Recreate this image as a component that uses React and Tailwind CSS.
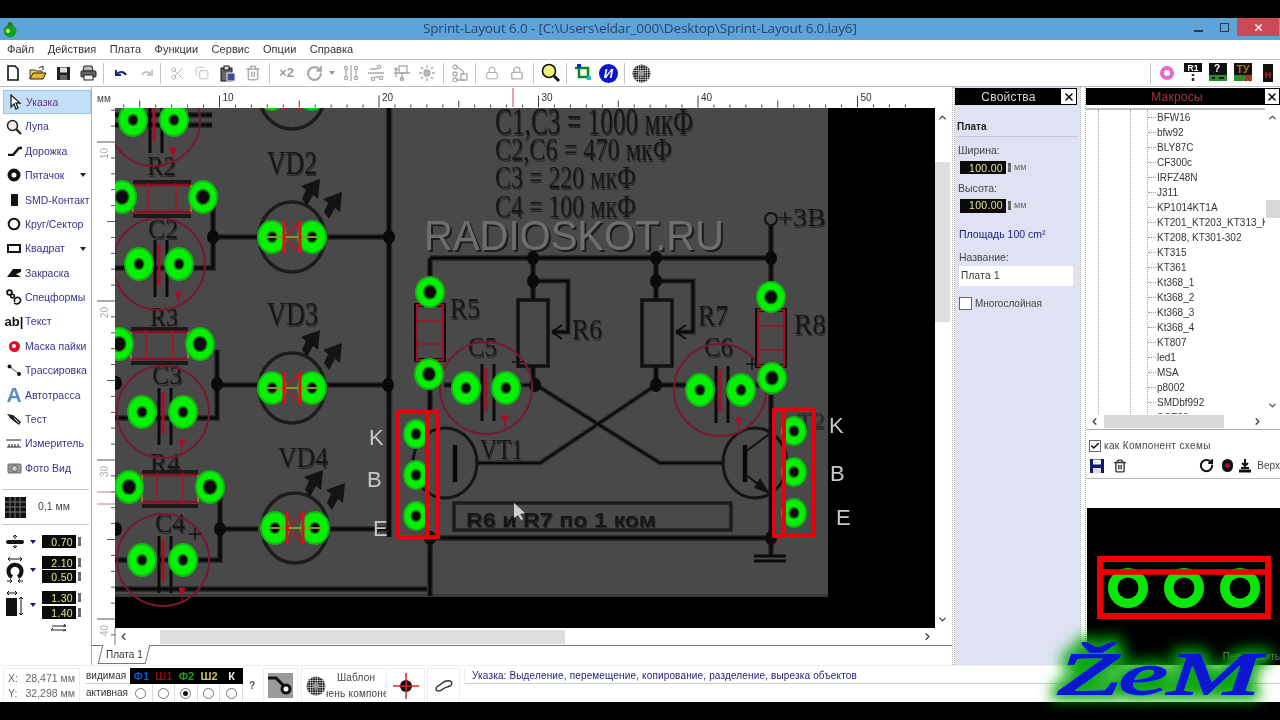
import React from "react";
import { Scissors, Copy, Trash2, RotateCw, Lock, ChevronUp, ChevronDown, ChevronLeft, ChevronRight, X as XIcon, Check } from "lucide-react";

const Wire = ({ d, w = 3 }) => (
  <>
    <path d={d} fill="none" stroke="#2c2c2c" strokeWidth={w + 3} />
    <path d={d} fill="none" stroke="#080808" strokeWidth={w} />
  </>
);
const Dot = ({ x, y, r = 6 }) => <ellipse cx={x} cy={y} rx={r} ry={r + 1} fill="#0a0a0a" />;
const Pad = ({ x, y, rx = 14, ry = 16, h = 4 }) => (
  <>
    <ellipse cx={x} cy={y} rx={rx + 1} ry={ry + 1} fill="#12b812" />
    <ellipse cx={x} cy={y} rx={rx - 1} ry={ry - 1} fill="#06f006" />
    <ellipse cx={x} cy={y} rx={h + 1.5} ry={h + 2} fill="#0a7a0a" />
    <ellipse cx={x} cy={y} rx={h} ry={h + 0.5} fill="#0c0c0c" />
  </>
);
const G = ({ x, y, w, s = 27, fill = "#161616", fam = "'Liberation Serif',serif", fw, children }) => (
  <text x={x} y={y} fontSize={s} fontFamily={fam} fontWeight={fw} fill={fill} textLength={w} lengthAdjust="spacingAndGlyphs" filter="url(#ghost)">{children}</text>
);
const Cap = ({ x, y, plus }) => (
  <>
    <ellipse cx={x} cy={y} rx={46} ry={46} fill="none" stroke="#7a1830" strokeWidth="2" />
    <path d={`M${x - 4} ${y - 24}V${y + 33}M${x + 8} ${y - 24}V${y + 33}`} stroke="#0a0a0a" strokeWidth="3" fill="none" />
    <path d={`M${x} ${y - 20}V${y + 22}`} stroke="#a80f26" strokeWidth="3" />
    <path d={`M${x + 16} ${y + 28}l3 8l3 -8zM${x + 19} ${y + 30}v12`} fill="#a80f26" stroke="#a80f26" strokeWidth="1" />
    {plus && <path d={`M${x + 26} ${y - 26}h12M${x + 32} ${y - 32}v12`} stroke="#111" strokeWidth="1.5" />}
  </>
);
const ResH = ({ x1, x2, y }) => (
  <>
    <path d={`M${x1} ${y - 15}H${x2}M${x1} ${y + 19}H${x2}`} stroke="#1a1a1a" strokeWidth="4" />
    <path d={`M${x1} ${y - 12}H${x2}M${x1} ${y + 15}H${x2}`} stroke="#8c1024" strokeWidth="2.5" />
    <path d={`M${x1 + 15} ${y - 14}V${y + 15}M${x2 - 15} ${y - 14}V${y + 15}`} stroke="#b00f28" strokeWidth="1.6" />
    <path d={`M${x1} ${y - 12}V${y + 15}M${x2} ${y - 12}V${y + 15}`} stroke="#a8861a" strokeWidth="1.6" />
  </>
);
const ResV = ({ x, y1, y2 }) => (
  <>
    <rect x={x - 14} y={y1} width="28" height={y2 - y1} fill="none" stroke="#0d0d0d" strokeWidth="4" />
    <rect x={x - 13} y={y1} width="26" height={y2 - y1} fill="none" stroke="#a30f26" strokeWidth="2" />
    <path d={`M${x - 13} ${y1 + 16}h26M${x - 13} ${y2 - 16}h26`} stroke="#9a1428" strokeWidth="1.5" />
  </>
);
const Led = ({ x, y }) => (
  <>
    <ellipse cx={x} cy={y} rx={33} ry={35} fill="none" stroke="#1c1c1c" strokeWidth="3.5" />
    <path d={`M${x + 28} ${y - 58}l-19 7l5 4l-4 9l5 7l6 -11l5 4zM${x + 50} ${y - 45}l-19 7l5 4l-4 9l5 7l6 -11l5 4z`} fill="#141414" />
    <Pad x={x - 20} y={y} />
    <Pad x={x + 20} y={y} />
    <path d={`M${x - 26} ${y}H${x + 26}`} stroke="#8a9a20" strokeWidth="2" />
    <path d={`M${x - 8} ${y - 16}V${y + 16}M${x + 8} ${y - 16}V${y + 16}`} stroke="#e00f1c" strokeWidth="3" />
    <path d={`M${x + 8} ${y - 15}L${x - 8} ${y}L${x + 8} ${y + 15}`} stroke="#d00f20" strokeWidth="1.5" fill="none" />
  </>
);

function Board() {
  return (
    <svg viewBox="115 108 820 520" className="w-[820px] h-[520px] block bg-black shrink-0">
      <defs>
        <filter id="ghost" x="-5%" y="-20%" width="110%" height="150%">
          <feOffset in="SourceAlpha" dx="1" dy="2" result="o" />
          <feFlood floodColor="#2a2a2a" />
          <feComposite in2="o" operator="in" result="g" />
          <feMerge><feMergeNode in="g" /><feMergeNode in="SourceGraphic" /></feMerge>
        </filter>
        <filter id="wm" x="-5%" y="-20%" width="110%" height="150%">
          <feOffset in="SourceAlpha" dx="2" dy="2" result="o" />
          <feFlood floodColor="#1a1a1a" />
          <feComposite in2="o" operator="in" result="g" />
          <feMerge><feMergeNode in="g" /><feMergeNode in="SourceGraphic" /></feMerge>
        </filter>
      </defs>
      <rect x="115" y="108" width="713" height="488" fill="#494949" />
      <rect x="115" y="594" width="713" height="3" fill="#3a3a3a" />
      <Wire d="M389 108V537" w={3.5} />
      <Wire d="M213 200V268H115" />
      <Wire d="M115 115H212M115 125H212" />
      <Wire d="M213 237H258M326 237H389" />
      <Wire d="M217 350V418H115" />
      <Wire d="M217 385H258M326 385H389" />
      <Wire d="M220 490V560H115" />
      <Wire d="M220 529H258M330 529H388" />
      <Wire d="M115 589H430" />
      <text x="424" y="250" fontSize="42" fontFamily="'Liberation Sans',sans-serif" fill="#6e6e6e" textLength="300" lengthAdjust="spacingAndGlyphs" filter="url(#wm)">RADIOSKOT.RU</text>
      <Wire d="M430 258H771M430 258V280" />
      <Wire d="M533 258V300M656 258V300M771 224V282" />
      <Wire d="M533 281H568V332H552M656 281H693V332H676" w={2.5} />
      <Wire d="M533 367V385M656 367V385" />
      <Wire d="M520 385H536L660 463H724M656 385L540 463H478" w={2} />
      <Wire d="M430 390V412M430 538V596M430 538H771" />
      <Wire d="M771 395V555" />
      <Wire d="M444 385H452M658 385H686M728 385H760" />
      <path d="M754 556H786M754 561H786" stroke="#0c0c0c" strokeWidth="3" />
      <ellipse cx="771" cy="219" rx="6" ry="6" fill="none" stroke="#111" strokeWidth="2" />
      {[[213, 237], [389, 237], [217, 384], [388, 385], [220, 529], [533, 258], [656, 258], [771, 258], [533, 281], [656, 281], [535, 385], [656, 385], [771, 538], [430, 538], [116, 383], [116, 529]].map(([x, y], i) => <Dot key={i} x={x} y={y} />)}
      <rect x="518" y="300" width="30" height="66" fill="none" stroke="#111" strokeWidth="3.5" />
      <rect x="642" y="300" width="30" height="66" fill="none" stroke="#111" strokeWidth="3.5" />
      <path d="M552 332l10 -7M552 332l10 7M676 332l10 -7M676 332l10 7" stroke="#0c0c0c" strokeWidth="2" />
      <ellipse cx="445" cy="463" rx="32" ry="35" fill="none" stroke="#141414" strokeWidth="3" />
      <ellipse cx="755" cy="463" rx="32" ry="35" fill="none" stroke="#141414" strokeWidth="3" />
      <path d="M455 445V482M745 445V482" stroke="#080808" strokeWidth="4.5" />
      <path d="M745 452L772 432M745 474L768 492" stroke="#111" strokeWidth="2" />
      <path d="M760 478l10 16l-16 -6z" fill="#111" />
      <rect x="454" y="503" width="277" height="27" fill="none" stroke="#1c1c1c" strokeWidth="3.5" />

      <G x={495} y={134} w={198} s={38}>С1,С3 = 1000 мкФ</G>
      <G x={495} y={160} w={177} s={31}>С2,С6 = 470 мкФ</G>
      <G x={495} y={188} w={141} s={31}>С3 = 220 мкФ</G>
      <G x={495} y={217} w={141} s={31}>С4 = 100 мкФ</G>
      <G x={777} y={226} w={49} s={26}>+3В</G>
      <G x={147} y={175} w={29}>R2</G>
      <G x={148} y={238} w={30}>C2</G>
      <G x={267} y={174} w={50} s={33}>VD2</G>
      <G x={267} y={325} w={51} s={33}>VD3</G>
      <G x={150} y={326} w={28}>R3</G>
      <G x={152} y={384} w={30}>C3</G>
      <G x={150} y={472} w={30}>R4</G>
      <G x={278} y={467} w={50} s={30}>VD4</G>
      <G x={155} y={532} w={30}>C4</G>
      <G x={450} y={318} w={30} s={30}>R5</G>
      <G x={572} y={339} w={30} s={30}>R6</G>
      <G x={698} y={325} w={30} s={30}>R7</G>
      <G x={794} y={334} w={32} s={30}>R8</G>
      <G x={468} y={356} w={29} s={28}>C5</G>
      <G x={704} y={356} w={29} s={28}>C6</G>
      <G x={480} y={459} w={43} s={29}>VT1</G>
      <G x={797} y={428} w={28} s={24} fill="#2a2a2a">T2</G>
      <G x={466} y={527} w={190} s={20} fw="bold" fam="'Liberation Sans',sans-serif">R6  и R7 по 1 ком</G>

      <Cap x={154} y={120} />
      <Cap x={159} y={264} />
      <Cap x={163} y={412} />
      <Cap x={163} y={560} plus />
      <Cap x={486} y={388} plus />
      <Cap x={720} y={390} plus />
      <ResH x1={133} x2={191} y={197} />
      <ResH x1={131} x2={188} y={344} />
      <ResH x1={142} x2={198} y={487} />
      <ResV x={430} y1={305} y2={360} />
      <ResV x={771} y1={310} y2={366} />
      <Led x={292} y={94} />
      <Led x={292} y={237} />
      <Led x={292} y={388} />
      <Led x={295} y={528} />
      {[[133, 120], [174, 120], [139, 264], [179, 264], [142, 412], [183, 412], [142, 560], [183, 560], [466, 388], [506, 388], [700, 390], [741, 390]].map(([x, y], i) => <Pad key={i} x={x} y={y} />)}
      {[[122, 197], [203, 197], [119, 344], [200, 344], [129, 487], [210, 487]].map(([x, y], i) => <Pad key={i} x={x} y={y} h={6} />)}
      {[[430, 292], [429, 374], [771, 297], [772, 378]].map(([x, y], i) => <Pad key={i} x={x} y={y} rx={14} ry={15} h={5.5} />)}
      {[[416, 434], [416, 475], [416, 516], [794, 431], [794, 472], [794, 513]].map(([x, y], i) => <Pad key={i} x={x} y={y} rx={12} ry={14} />)}
      <rect x="397" y="412" width="41" height="125" fill="none" stroke="#e8000c" strokeWidth="4" />
      <path d="M427 412V537" stroke="#e8000c" strokeWidth="4" />
      <rect x="774" y="410" width="40" height="126" fill="none" stroke="#e8000c" strokeWidth="4" />
      <path d="M784 410V536" stroke="#e8000c" strokeWidth="4" />
      {[["K", 369, 445], ["B", 367, 487], ["E", 373, 536], ["K", 829, 433], ["B", 830, 481], ["E", 836, 525]].map(([t, x, y], i) => (
        <text key={i} x={x} y={y} fontSize="22" fill="#c8c8c8" fontFamily="'Liberation Sans',sans-serif">{t}</text>
      ))}
      <path d="M514 503v15l4 -3l3 5l2 -1l-3 -5l5 -1z" fill="#d0d0d0" />
    </svg>
  );
}

function HRuler() {
  const ticks = [];
  for (let i = 4; i <= 53; i++) {
    const x = (i - 10) * 15.95 + 219.5 - 95;
    if (x < 20) continue;
    const h = i % 10 === 0 ? 12 : i % 5 === 0 ? 7 : 3;
    ticks.push(<path key={i} d={`M${x} 20.5V${20.5 - h}`} stroke="#444" strokeWidth="1" />);
    if (i % 10 === 0) ticks.push(<text key={"t" + i} x={x + 3} y="14" fontSize="10" fill="#333" fontFamily="'Liberation Sans',sans-serif">{i}</text>);
  }
  return (
    <svg viewBox="0 0 855 21" className="w-[855px] h-[21px] block ml-[3px]">
      {ticks}
      <text x="2" y="15" fontSize="10" fill="#444" fontFamily="'Liberation Sans',sans-serif">мм</text>
      <path d="M418 1V20" stroke="#c05060" strokeWidth="1" />
    </svg>
  );
}
function VRuler() {
  const ticks = [];
  for (let i = 8; i <= 41; i++) {
    const y = (i - 10) * 15.9 + 142 - 108;
    if (y < 0) continue;
    const w = i % 10 === 0 ? 18 : i % 5 === 0 ? 8 : 4;
    ticks.push(<path key={i} d={`M20 ${y}H${20 - w}`} stroke="#555" strokeWidth="1" />);
    if (i % 10 === 0) ticks.push(<text key={"t" + i} transform={`translate(13 ${y + 17}) rotate(-90)`} fontSize="10" fill="#aaa" fontFamily="'Liberation Sans',sans-serif">{i}</text>);
  }
  return (
    <svg viewBox="0 0 20 520" className="w-[20px] h-[520px] block ml-[3px] shrink-0 overflow-visible">
      {ticks}
      <path d="M2 384H20M2 396H20" stroke="#c08090" strokeWidth="1" />
      <path d="M20 520V537" stroke="#777" strokeWidth="1" />
    </svg>
  );
}

const Ic = ({ children, w = 20, h = 20, vb }) => <svg viewBox={vb || `0 0 ${w} ${h}`} width={w} height={h} className="block">{children}</svg>;
const TB = ({ children, w = "w-[25.4px]" }) => <div className={`${w} h-[27px] flex items-center justify-center shrink-0`}>{children}</div>;
const Sep = ({ m = "mx-[3px]" }) => <div className={`w-px h-[21px] bg-[#c4c4c4] shrink-0 ${m}`} />;

const DotGrid = ({ s = 20 }) => (
  <svg viewBox="0 0 20 20" width={s} height={s} className="block">
    <defs><pattern id={"dg" + s} width="2.4" height="2.4" patternUnits="userSpaceOnUse"><rect width="1.9" height="1.9" fill="#111" /></pattern></defs>
    <circle cx="10" cy="10" r="9.5" fill={`url(#dg${s})`} />
    <circle cx="10" cy="10" r="3" fill="#999" />
  </svg>
);

function Toolbar() {
  return (
    <div className="h-[28px] bg-white border-y border-[#bdbdbd] flex items-center shrink-0">
      <TB><Ic w={14} h={16}><path d="M2 1h7l3 3v11H2z" fill="#fff" stroke="#111" strokeWidth="1.6" /></Ic></TB>
      <TB><Ic w={18} h={16}><path d="M1 14V5h5l1 1h6v2" fill="#f5d86a" stroke="#333" /><path d="M1 14l3-6h13l-3 6z" fill="#e8b92e" stroke="#222" /><path d="M10 3l4-2v4" fill="none" stroke="#222" /></Ic></TB>
      <TB><Ic w={15} h={15}><rect x="1" y="1" width="13" height="13" fill="#222" /><rect x="4" y="1.5" width="7" height="5" fill="#ddd" /><rect x="4" y="9" width="7" height="5" fill="#666" /></Ic></TB>
      <TB><Ic w={17} h={16}><path d="M4 1h8l1 5H3z" fill="#bbb" stroke="#222" /><rect x="1" y="6" width="15" height="6" rx="1" fill="#666" stroke="#222" /><rect x="4" y="10" width="9" height="5" fill="#eee" stroke="#222" /></Ic></TB>
      <Sep m="ml-[1px] mr-[5px]" />
      <TB><Ic w={14} h={12}><path d="M2 3v5h5M2.5 7.5C5 4 10 4 12 8" fill="none" stroke="#152a70" strokeWidth="2" /></Ic></TB>
      <TB><Ic w={14} h={12}><path d="M12 3v5H7M11.5 7.5C9 4 4 4 2 8" fill="none" stroke="#c4c4c4" strokeWidth="2" /></Ic></TB>
      <Sep m="ml-[1px] mr-[3px]" />
      <TB><Scissors size={15} color="#b0b0b0" strokeWidth={1.5} /></TB>
      <TB><Copy size={14} color="#b8b8b8" strokeWidth={1.5} /></TB>
      <TB><Ic w={17} h={17}><rect x="2" y="3" width="11" height="13" fill="#666" stroke="#111" /><rect x="5" y="1" width="5" height="4" fill="#ddd" stroke="#111" /><rect x="8" y="8" width="8" height="8" fill="#3a4f96" stroke="#eee" /></Ic></TB>
      <TB><Trash2 size={16} color="#aaa" strokeWidth={2.2} /></TB>
      <Sep m="ml-[3px] mr-[4px]" />
      <TB><span className="text-[13px] font-bold text-[#9a9a9a]">×2</span></TB>
      <TB w="w-[30px]"><RotateCw size={17} color="#a8a8a8" strokeWidth={3} /></TB>
      <div className="w-0 h-0 border-x-[3px] border-t-[4px] border-x-transparent border-t-[#999] shrink-0 mr-[3px]" />
      {[0, 1, 2, 3].map((i) => (
        <TB key={i}>
          <Ic w={18} h={18}>
            <g fill="none" stroke="#aaa" strokeWidth="1.3">
              {i === 0 && <><circle cx="4" cy="4" r="1.6" /><circle cx="14" cy="4" r="1.6" /><circle cx="4" cy="14" r="1.6" /><circle cx="14" cy="14" r="1.6" /><path d="M9 1v16M4 6v6M14 6v6" /></>}
              {i === 1 && <><circle cx="12" cy="3" r="1.6" /><circle cx="6" cy="15" r="1.6" /><circle cx="14" cy="14" r="1.6" /><path d="M1 9h16M3 5h7M8 13h4" /></>}
              {i === 2 && <><rect x="6" y="2" width="8" height="7" /><path d="M1 9h16M9 9v7M3 4v9M1 6l2-2 2 2" /><circle cx="9" cy="15" r="1.6" /></>}
              {i === 3 && <><circle cx="9" cy="9" r="3" fill="#bbb" /><path d="M9 1v3M9 14v3M1 9h3M14 9h3M3 3l2 2M13 13l2 2M3 15l2-2M13 5l2-2" /></>}
            </g>
          </Ic>
        </TB>
      ))}
      <Sep m="ml-[3px] mr-[3px]" />
      <TB><Ic w={16} h={18}><g fill="none" stroke="#aaa" strokeWidth="1.3"><circle cx="3" cy="3" r="2" /><circle cx="3" cy="10" r="2" /><circle cx="3" cy="16" r="2" /><path d="M5 3l6 4v4M5 16h8" /><rect x="9" y="10" width="6" height="6" /></g></Ic></TB>
      <Sep m="ml-[3px] mr-[3px]" />
      <TB><Lock size={14} color="#b0b0b0" strokeWidth={1.8} /></TB>
      <TB><Lock size={14} color="#b0b0b0" strokeWidth={2.4} /></TB>
      <Sep m="ml-[3px] mr-[4px]" />
      <TB><Ic w={20} h={20}><circle cx="8" cy="8" r="6.5" fill="#f4f07a" stroke="#111" strokeWidth="1.6" /><path d="M13 13l5 5" stroke="#111" strokeWidth="3" /></Ic></TB>
      <Sep m="ml-[3px] mr-[3px]" />
      <TB><Ic w={18} h={20}><path d="M1 5h13v12" fill="none" stroke="#0a8a1a" strokeWidth="2.5" /><path d="M5 1v13h12" fill="none" stroke="#0a8a1a" strokeWidth="2.5" /><rect x="3" y="1" width="4" height="4" fill="#0a2ad0" /><rect x="13" y="13" width="4" height="4" fill="#22b8e8" /></Ic></TB>
      <TB><div className="w-[19px] h-[19px] rounded-full bg-[#0a14c8] flex items-center justify-center text-white font-bold italic text-[13px] leading-none">И</div></TB>
      <Sep m="ml-[3px] mr-[4px]" />
      <TB><DotGrid s={19} /></TB>
      <div className="flex-1" />
      <Sep m="mr-[3px]" />
      <TB><div className="w-[14px] h-[14px] rounded-full border-[4px] border-[#e468d0] bg-white" /></TB>
      <TB><Ic w={20} h={20}><rect x="1" y="0" width="18" height="9" fill="#111" /><text x="10" y="8" fontSize="8.5" fontWeight="bold" fill="#fff" textAnchor="middle" fontFamily="'Liberation Sans',sans-serif">R1</text><path d="M10 11v2M10 15v3" stroke="#333" strokeWidth="2.5" /></Ic></TB>
      <TB><Ic w={20} h={20}><rect x="1" y="0" width="18" height="18" fill="#111" /><text x="9" y="9" fontSize="10" fontWeight="bold" fill="#fff" textAnchor="middle" fontFamily="'Liberation Sans',sans-serif">?</text><rect x="1" y="12" width="18" height="6" fill="#2e8a2e" /><rect x="4" y="14" width="3" height="2" fill="#111" /><rect x="11" y="14" width="5" height="2" fill="#111" /></Ic></TB>
      <TB><Ic w={20} h={20}><rect x="1" y="0" width="18" height="18" fill="#111" /><text x="10" y="10" fontSize="10.5" fontWeight="bold" fill="#b06a2a" textAnchor="middle" fontFamily="'Liberation Sans',sans-serif">ТУ</text><rect x="1" y="12" width="18" height="6" fill="#2e8a2e" /><path d="M12 12l6 6M18 12l-6 6" stroke="#c02020" strokeWidth="2" /></Ic></TB>
      <TB w="w-[24px]"><Ic w={12} h={20}><rect x="1" y="1" width="10" height="18" fill="#111" /><text x="6" y="15" fontSize="9" fontWeight="bold" fill="#d01818" textAnchor="middle" fontFamily="'Liberation Sans',sans-serif">Н</text></Ic></TB>
    </div>
  );
}

const side = [
  ["Указка", <Ic w={14} h={16}><path d="M3 1v12l3-3 2 5 2-1-2-5h4z" fill="#fff" stroke="#222" strokeWidth="1.3" /></Ic>],
  ["Лупа", <Ic w={16} h={16}><circle cx="6.5" cy="6.5" r="5" fill="#eee" stroke="#222" strokeWidth="1.5" /><path d="M10 10l5 5" stroke="#222" strokeWidth="2.4" /></Ic>],
  ["Дорожка", <Ic w={15} h={10}><path d="M1 9l5 0 6-7h3" fill="none" stroke="#111" strokeWidth="2.4" /></Ic>],
  ["Пятачок", <Ic w={14} h={14}><circle cx="7" cy="7" r="4.5" fill="#fff" stroke="#111" strokeWidth="4" /></Ic>],
  ["SMD-Контакт", <div className="w-[7px] h-[12px] bg-[#111]" />],
  ["Круг/Сектор", <Ic w={14} h={14}><circle cx="7" cy="7" r="5.3" fill="none" stroke="#111" strokeWidth="2" /></Ic>],
  ["Квадрат", <div className="w-[14px] h-[9px] border-2 border-[#111]" />],
  ["Закраска", <Ic w={15} h={11}><path d="M0 10L6 2h8v3L9 7l5 3z" fill="#111" /></Ic>],
  ["Спецформы", <Ic w={16} h={16}><circle cx="3.5" cy="3.5" r="2.4" fill="none" stroke="#111" strokeWidth="1.8" /><circle cx="6.5" cy="7" r="1.8" fill="none" stroke="#111" strokeWidth="1.6" /><path d="M9 13a3 3 0 1 1 5 0a4 4 0 0 1-6 1" fill="none" stroke="#111" strokeWidth="1.6" /></Ic>],
  ["Текст", <span className="text-[13px] font-bold text-[#111] leading-none whitespace-nowrap">ab|</span>],
  ["Маска пайки", <div className="w-[11px] h-[11px] rounded-full bg-[#d8102a] flex items-center justify-center"><div className="w-[4px] h-[4px] rounded-full bg-white" /></div>],
  ["Трассировка", <Ic w={14} h={12}><path d="M2 2l10 8" stroke="#555" /><circle cx="2.5" cy="2.5" r="2" fill="#111" /><circle cx="12" cy="10" r="2" fill="#111" /></Ic>],
  ["Автотрасса", <span className="text-[21px] font-bold text-[#5b8cc0] leading-none">A</span>],
  ["Тест", <Ic w={16} h={13}><path d="M1 1l6 1 8 7-2 3-8-6z" fill="#222" /><path d="M8 5l5 5" stroke="#ddd" /></Ic>],
  ["Измеритель", <Ic w={16} h={9}><path d="M0 1h15M1 8h14M3 5v3M6 5v3M9 5v3M12 5v3" stroke="#222" strokeWidth="1" /></Ic>],
  ["Фото Вид", <Ic w={15} h={12}><rect x="1" y="2" width="13" height="9" rx="1" fill="#999" stroke="#666" /><circle cx="7.5" cy="6.5" r="3" fill="#ccc" stroke="#555" /></Ic>],
];

const Num = ({ v, w = "w-[34px]", h = "h-[13px]" }) => (
  <div className={`${w} ${h} bg-[#0a0a0a] text-[#e4e68a] text-[10.5px] leading-none flex items-center justify-end pr-[3px] shrink-0 tracking-[0.3px]`}>{v}</div>
);
const Spin = () => <div className="w-[3px] h-[9px] bg-[#777] border-y-[3px] border-y-[#666] ml-[2px] shrink-0" />;
const Tri = () => <div className="w-0 h-0 border-x-[3px] border-t-[4px] border-x-transparent border-t-[#10108a] shrink-0" />;

function Sidebar() {
  return (
    <div className="w-[92px] shrink-0 bg-white border-r border-[#b0b0b0] flex flex-col pt-[3px] relative">
      {side.map(([t, ic], i) => (
        <div key={t} className={`h-[24.4px] flex items-center shrink-0 ml-[3px] ${i === 0 ? "bg-[#c4e0f9] border border-[#9cc4e4] text-[#6a2a8a]" : "text-[#35358c]"}`}>
          <div className="w-[22px] flex justify-center shrink-0">{ic}</div>
          <span className="text-[10.5px] leading-none whitespace-nowrap">{t}</span>
          {(t === "Пятачок" || t === "Квадрат") && <div className="ml-auto mr-[5px] w-0 h-0 border-x-[3.5px] border-t-[4px] border-x-transparent border-t-[#222]" />}
        </div>
      ))}
      <div className="h-px bg-[#c8c8c8] mt-[9px] mx-[2px] shrink-0" />
      <div className="flex items-center mt-[6px] pl-[5px] h-[22px] shrink-0">
        <Ic w={21} h={21}>
          <rect width="21" height="21" fill="#111" />
          <path d="M5 0v21M10 0v21M15 0v21M0 5h21M0 10h21M0 15h21" stroke="#777" strokeWidth="1" />
        </Ic>
        <span className="text-[10.5px] text-[#444] ml-[12px]">0,1 мм</span>
      </div>
      <div className="h-px bg-[#c8c8c8] mt-[6px] mx-[2px] shrink-0" />
      <div className="flex items-center mt-[10px] h-[13px] pl-[5px] shrink-0">
        <div className="w-[20px]"><Ic w={20} h={13}><rect x="1" y="5" width="18" height="4" rx="2" fill="#111" /><path d="M10 0v4M8 2l2-2 2 2M10 10v3M8 11l2 2 2-2" stroke="#111" strokeWidth="1" fill="none" /></Ic></div>
        <div className="ml-[5px] mr-[5px]"><Tri /></div>
        <div className="ml-[1px] flex items-center"><Num v="0.70" /><Spin /></div>
      </div>
      <div className="flex mt-[8px] pl-[5px] shrink-0">
        <div className="w-[20px] pt-[1px]"><Ic w={20} h={26}><path d="M3 2h14M3 2l2-2M3 2l2 2M17 2l-2-2M17 2l-2 2M2 24h5M7 24l-2-2M7 24l-2 2M18 24h-5M13 24l2-2M13 24l2 2" stroke="#111" strokeWidth="1" fill="none" /><path d="M7 20a6.5 6.5 0 1 1 6 0" fill="none" stroke="#111" strokeWidth="4" /></Ic></div>
        <div className="ml-[5px] mr-[5px] self-center"><Tri /></div>
        <div className="ml-[1px] flex flex-col gap-[1px]">
          <div className="flex items-center"><Num v="2.10" /><Spin /></div>
          <div className="flex items-center"><Num v="0.50" /><Spin /></div>
        </div>
      </div>
      <div className="flex mt-[8px] pl-[5px] shrink-0">
        <div className="w-[20px]"><Ic w={20} h={26}><path d="M2 2h10M2 2l2-2M2 2l2 2M12 2l-2-2M12 2l-2 2" stroke="#111" fill="none" strokeWidth="1" /><rect x="1" y="7" width="11" height="18" fill="#111" /><path d="M16 6v18M14 8l2-2 2 2M14 22l2 2 2-2" stroke="#111" fill="none" /></Ic></div>
        <div className="ml-[5px] mr-[5px] self-center"><Tri /></div>
        <div className="ml-[1px] flex flex-col gap-[2px]">
          <div className="flex items-center"><Num v="1.30" /><Spin /></div>
          <div className="flex items-center"><Num v="1.40" /><Spin /></div>
        </div>
      </div>
      <div className="ml-[50px] mt-[5px] shrink-0"><Ic w={19} h={8}><path d="M1 6h15l-3 1M3 4l-2 2M2 2h14l-2-2M16 2l-3 0" fill="none" stroke="#222" strokeWidth="1" /></Ic></div>
    </div>
  );
}

const macros = ["BFW16", "bfw92", "BLY87C", "CF300c", "IRFZ48N", "J311", "KP1014KT1A", "KT201_KT203_KT313_KT", "KT208, KT301-302", "KT315", "KT361", "Kt368_1", "Kt368_2", "Kt368_3", "Kt368_4", "KT807", "led1", "MSA", "p8002", "SMDbf992", "SOT23"];

const CloseBox = ({ w }) => (
  <div className={`${w} h-[15px] bg-white flex items-center justify-center shrink-0`}><XIcon size={12} color="#111" strokeWidth={3.2} /></div>
);

function Props() {
  return (
    <div className="w-[125px] shrink-0 bg-[#dfe2f2] flex flex-col">
      <div className="h-[17px] mt-[1px] bg-black flex items-center shrink-0 pr-[1px] mr-[3px]">
        <div className="flex-1 text-center text-[12px] text-[#d8d8d8] tracking-[0.2px] leading-none pl-[1px]">Свойства</div>
        <CloseBox w="w-[15px]" />
      </div>
      <div className="h-[32px] mx-[2px] border-b border-[#c6c8d8] flex items-end pb-[2px] text-[10px] font-bold text-[#222] shrink-0">Плата</div>
      <div className="text-[10.5px] text-[#444] mt-[7px] ml-[3px] leading-[12px]">Ширина:</div>
      <div className="flex items-center ml-[5px] mt-[5px]">
        <Num v="100.00" w="w-[46px]" h="h-[13px]" /><Spin /><span className="text-[9px] text-[#666] ml-[3px]">мм</span>
      </div>
      <div className="text-[10.5px] text-[#444] mt-[7px] ml-[3px] leading-[12px]">Высота:</div>
      <div className="flex items-center ml-[5px] mt-[5px]">
        <Num v="100.00" w="w-[46px]" h="h-[14px]" /><Spin /><span className="text-[9px] text-[#666] ml-[3px]">мм</span>
      </div>
      <div className="text-[10.5px] text-[#1c1c80] mt-[15px] ml-[4px] leading-[12px] whitespace-nowrap">Площадь  100 cm²</div>
      <div className="text-[10.5px] text-[#444] mt-[11px] ml-[4px] leading-[12px]">Название:</div>
      <div className="h-[20px] w-[114px] bg-white ml-[4px] mt-[3px] flex items-center pl-[2px] text-[10px] text-[#333] tracking-[0.3px] shrink-0">Плата 1</div>
      <div className="flex items-center ml-[4px] mt-[10px]">
        <div className="w-[13px] h-[13px] bg-white border border-[#666] shrink-0" />
        <span className="text-[10px] text-[#444] ml-[3px] whitespace-nowrap">Многослойная</span>
      </div>
    </div>
  );
}

function Macros() {
  return (
    <div className="w-[194px] shrink-0 bg-white flex flex-col relative">
      <div className="h-[17px] mt-[1px] flex items-center bg-black shrink-0">
        <div className="flex-1 text-center text-[12px] text-[#a83248] leading-none tracking-[0.2px] pl-[3px]">Макросы</div>
        <CloseBox w="w-[14px] mr-px" />
      </div>
      <div className="h-[322px] mt-[3px] border-b border-[#aaa] flex flex-col shrink-0 overflow-hidden">
        <div className="flex flex-1 overflow-hidden">
          <div className="relative flex-1 overflow-hidden border-t-2 border-[#bbb]">
            <div className="absolute top-0 bottom-0 left-[12px] border-l border-dotted border-[#aaa]" />
            <div className="absolute top-0 bottom-0 left-[44px] border-l border-dotted border-[#aaa]" />
            <div className="absolute top-0 bottom-0 left-[61px] border-l border-dotted border-[#aaa]" />
            {macros.map((m) => (
              <div key={m} className="h-[15px] flex items-center pl-[62px] whitespace-nowrap text-[10px] text-[#333]">
                <span className="w-[8px] border-t border-dotted border-[#999] shrink-0 mr-px" />{m}
              </div>
            ))}
          </div>
          <div className="w-[15px] flex flex-col items-center shrink-0 relative">
            <div className="mt-[4px]"><ChevronUp size={11} color="#555" strokeWidth={3} /></div>
            <div className="absolute top-[92px] w-[14px] h-[18px] bg-[#d8d8d8]" />
            <div className="mt-auto mb-[3px]"><ChevronDown size={11} color="#555" strokeWidth={3} /></div>
          </div>
        </div>
        <div className="h-[15px] flex items-center shrink-0">
          <div className="ml-[3px]"><ChevronLeft size={11} color="#444" strokeWidth={3} /></div>
          <div className="ml-[4px] w-[120px] h-[13px] bg-[#d8d8d8]" />
          <div className="ml-[28px]"><ChevronRight size={11} color="#444" strokeWidth={3} /></div>
        </div>
      </div>
      <div className="flex items-center mt-[8px] ml-[3px] shrink-0">
        <div className="w-[12px] h-[12px] border border-[#666] flex items-center justify-center shrink-0"><Check size={10} color="#111" strokeWidth={3.5} /></div>
        <span className="text-[10px] text-[#444] ml-[3px] tracking-[0.35px]">как Компонент схемы</span>
      </div>
      <div className="flex items-center h-[17px] mt-[4px] shrink-0 border-b-0">
        <div className="ml-[4px]"><Ic w={14} h={14}><rect x="0" y="0" width="14" height="14" fill="#101a6a" /><rect x="3" y="0.5" width="8" height="5" fill="#eee" /><rect x="3" y="9" width="8" height="5" fill="#ddd" /></Ic></div>
        <div className="ml-[9px]"><Trash2 size={14} color="#333" strokeWidth={2.4} /></div>
        <div className="ml-[72px]"><RotateCw size={15} color="#111" strokeWidth={3.2} /></div>
        <div className="ml-[8px] w-[13px] h-[13px] rounded-full bg-[#111] flex items-center justify-center"><div className="w-[5px] h-[5px] rounded-full bg-[#a01030]" /></div>
        <div className="ml-[5px]"><Ic w={14} h={14}><path d="M7 0v6M4 4l3 3 3-3" stroke="#111" fill="none" strokeWidth="2" /><path d="M1 12h12" stroke="#111" strokeWidth="3" /><path d="M3 9h8" stroke="#111" strokeWidth="2" /></Ic></div>
        <span className="text-[10px] text-[#444] ml-[5px] whitespace-nowrap">Верх</span>
      </div>
      <div className="h-px bg-[#bbb] mt-[4px] shrink-0" />
      <div className="h-[29px] bg-white shrink-0" />
      <div className="flex-1 bg-black ml-px relative overflow-hidden">
        <svg viewBox="0 0 193 157" className="w-[193px] h-[157px] block">
          {[41, 97, 153].map((x) => (
            <g key={x}>
              <circle cx={x} cy="80" r="20" fill="#0ae60a" />
              <circle cx={x} cy="80" r="10.5" fill="#000" />
            </g>
          ))}
          <rect x="13" y="51" width="168" height="57" fill="none" stroke="#f00000" strokeWidth="6" />
          <path d="M13 64H181" stroke="#f00000" strokeWidth="5.5" />
        </svg>
        <div className="absolute right-0 bottom-px text-[10px] text-[#777] whitespace-nowrap">Перетащить</div>
      </div>
    </div>
  );
}

const Gutter = ({ w }) => (
  <div className={`${w} shrink-0 bg-white border-x border-dotted border-[#aaa]`} />
);

function Status() {
  const layers = [["Ф1", "text-[#1450c8]"], ["Ш1", "text-[#8a0a10]"], ["Ф2", "text-[#1ea01e]"], ["Ш2", "text-[#c8c860]"], ["К", "text-[#f0f0f0]"]];
  return (
    <div className="h-[37px] bg-white flex pt-[2px] shrink-0 border-t border-[#eee]">
      <div className="w-[77px] ml-[3px] border border-b-0 border-[#eee] flex flex-col justify-center gap-[3px] text-[10.5px] leading-[12px] text-[#666] px-[4px] shrink-0">
        <div className="flex justify-between whitespace-nowrap"><span>X:</span><span>28,471 мм</span></div>
        <div className="flex justify-between whitespace-nowrap"><span>Y:</span><span>32,298 мм</span></div>
      </div>
      <div className="flex flex-col ml-[6px] w-[43px] text-[10px] leading-none text-[#333] shrink-0 whitespace-nowrap overflow-hidden">
        <div className="h-[16px] flex items-center border-b border-[#ccc]">видимая</div>
        <div className="flex-1 flex items-center">активная</div>
      </div>
      <div className="flex flex-col w-[113px] ml-px shrink-0">
        <div className="h-[16px] bg-black flex shrink-0">
          {layers.map(([t, c]) => <div key={t} className={`flex-1 text-center text-[11px] font-bold leading-[16px] ${c}`}>{t}</div>)}
        </div>
        <div className="flex flex-1">
          {layers.map(([t], i) => (
            <div key={t} className="flex-1 flex items-center justify-center border-r border-[#ddd]">
              <div className="w-[11px] h-[11px] rounded-full border border-[#777] flex items-center justify-center bg-white">
                {i === 2 && <div className="w-[5px] h-[5px] rounded-full bg-[#111]" />}
              </div>
            </div>
          ))}
        </div>
      </div>
      <div className="w-[18px] flex items-center justify-center text-[10px] font-bold text-[#555] shrink-0">?</div>
      <div className="ml-[2px] w-[35px] border-x border-t border-[#eee] flex items-center justify-center shrink-0">
        <Ic w={25} h={25}><rect width="25" height="25" fill="#9a9a9a" /><path d="M0 5h8l10 10" fill="none" stroke="#111" strokeWidth="3" /><circle cx="18" cy="16" r="4" fill="#fff" stroke="#111" strokeWidth="3" /></Ic>
      </div>
      <div className="ml-[3px] w-[86px] border-x border-t border-[#eee] flex items-center pl-[4px] shrink-0 overflow-hidden">
        <DotGrid s={20} />
        <div className="flex flex-col items-center w-[60px] text-[10px] leading-[16px] text-[#444] whitespace-nowrap overflow-hidden tracking-[0.2px]">
          <div>Шаблон</div>
          <div className="w-[60px] overflow-hidden flex justify-center">чень компоне</div>
        </div>
      </div>
      <div className="ml-[1px] w-[37px] border-r border-t border-[#eee] flex items-center justify-center shrink-0">
        <Ic w={26} h={26}><path d="M13 0v26M0 13h26" stroke="#e02020" strokeWidth="1.5" /><circle cx="13" cy="13" r="6" fill="#111" /><path d="M13 7v12M7 13h12" stroke="#e02020" strokeWidth="1.5" /></Ic>
      </div>
      <div className="ml-[2px] w-[33px] border-x border-t border-[#eee] flex items-center justify-center shrink-0">
        <Ic w={18} h={13}><path d="M1 10c0-3 3-3 5-5s5-4 9-3c3 1 2 4 0 5s-5 1-7 3-7 3-7 0z" fill="none" stroke="#333" strokeWidth="1.4" /></Ic>
      </div>
      <div className="ml-[4px] flex-1 flex flex-col">
        <div className="h-[16px] border-b border-[#ccc] border-l border-l-[#eee] flex items-center pl-[7px] text-[10px] leading-none text-[#24247c] whitespace-nowrap tracking-[0.15px]">Указка: Выделение, перемещение, копирование, разделение, вырезка объектов</div>
      </div>
    </div>
  );
}

export default function App() {
  return (
    <div className="w-[1280px] h-[720px] overflow-hidden bg-black flex flex-col relative font-['Liberation_Sans',sans-serif] [filter:blur(0.35px)]">
      <div className="h-[18px] shrink-0" />
      <div className="h-[22px] bg-[#5fa4d8] flex items-center shrink-0">
        <div className="ml-[2px] w-[15px] shrink-0"><Ic w={15} h={17}><circle cx="8" cy="10" r="6.5" fill="#13a02a" /><circle cx="8" cy="3.5" r="2.5" fill="#2a7a2a" /><circle cx="6" cy="10" r="2" fill="#e8f050" /></Ic></div>
        <div className="ml-[406px] text-[13.5px] leading-none text-[#25466a] font-['Open_Sans',sans-serif] whitespace-nowrap tracking-[-0.15px]">{"Sprint-Layout 6.0 - [C:\\Users\\eldar_000\\Desktop\\Sprint-Layout 6.0.lay6]"}</div>
        <div className="w-[9px] h-[2px] bg-[#2a3a4a] ml-auto mr-[17px] mt-[3px]" />
        <div className="w-[9px] h-[9px] border border-[#2a3a4a] mr-[8px] mb-[3px]" />
        <div className="w-[42px] h-[18px] bg-[#cb4a58] mr-px self-start flex items-center justify-center"><XIcon size={11} color="#fff" strokeWidth={3} /></div>
      </div>
      <div className="h-[19px] bg-white flex items-center pl-[7px] gap-[13.4px] text-[11px] leading-none text-[#333] shrink-0 tracking-[0.05px]">
        {["Файл", "Действия", "Плата", "Функции", "Сервис", "Опции", "Справка"].map((m) => <span key={m}>{m}</span>)}
      </div>
      <Toolbar />
      <div className="h-[578px] flex shrink-0 bg-white">
        <Sidebar />
        <div className="w-[860px] shrink-0 flex flex-col bg-white relative">
          <HRuler />
          <div className="flex shrink-0">
            <VRuler />
            <Board />
            <div className="w-[15px] h-[520px] flex flex-col items-center shrink-0 relative">
              <div className="mt-[4px]"><ChevronUp size={11} color="#444" strokeWidth={3} /></div>
              <div className="absolute top-[54px] left-0 w-[15px] h-[160px] bg-[#dedede]" />
              <div className="mt-auto mb-[3px]"><ChevronDown size={11} color="#444" strokeWidth={3} /></div>
            </div>
          </div>
          <div className="h-[17px] flex items-center shrink-0 pl-[26px]">
            <ChevronLeft size={11} color="#444" strokeWidth={3} />
            <div className="ml-[31px] w-[405px] h-[14px] bg-[#dedede]" />
            <div className="ml-[357px]"><ChevronRight size={11} color="#444" strokeWidth={3} /></div>
          </div>
          <div className="h-[20px] border-t border-[#777] shrink-0 ml-[-1px] pl-[9px] relative">
            <div className="absolute left-[9px] top-[-1px] w-[48px] h-[19px] bg-white border-b border-x border-[#777] flex items-center justify-center text-[10px] text-[#333] skew-x-[-14deg]"><span className="skew-x-[14deg] whitespace-nowrap">Плата 1</span></div>
          </div>
        </div>
        <Gutter w="w-[3px]" />
        <Props />
        <Gutter w="w-[6px]" />
        <Macros />
      </div>
      <Status />
      <div className="flex-1 bg-black" />
      <svg viewBox="0 0 260 120" className="absolute left-[1020px] top-[600px] w-[260px] h-[120px] pointer-events-none">
        <defs>
          <filter id="glow" x="-30%" y="-60%" width="160%" height="220%">
            <feMorphology in="SourceAlpha" operator="dilate" radius="5" result="fat" />
            <feGaussianBlur in="fat" stdDeviation="7" result="b" />
            <feFlood floodColor="#0aa80a" />
            <feComposite in2="b" operator="in" result="g" />
            <feMerge><feMergeNode in="g" /><feMergeNode in="SourceGraphic" /></feMerge>
          </filter>
        </defs>
        <text x="37" y="94" fontSize="60" fontStyle="italic" fontFamily="'Liberation Serif',serif" fill="#0a14d0" stroke="#0a14d0" strokeWidth="1.8" filter="url(#glow)" textLength="203" lengthAdjust="spacingAndGlyphs">ŽeM</text>
      </svg>
    </div>
  );
}
